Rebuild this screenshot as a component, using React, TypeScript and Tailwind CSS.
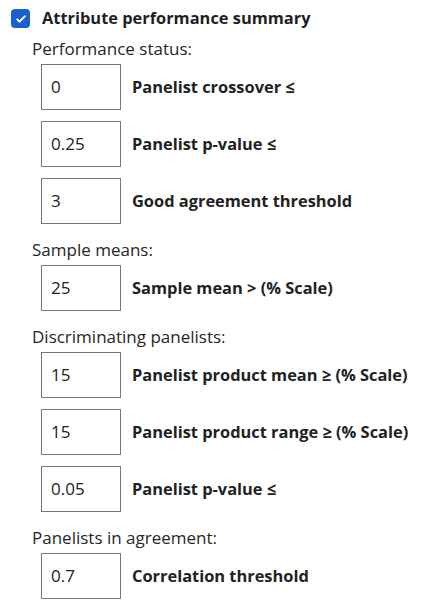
import React from 'react';

type Field = { value: string; label: string };
type Section = { title: string; fields: Field[] };

const sections: Section[] = [
  {
    title: 'Performance status:',
    fields: [
      { value: '0', label: 'Panelist crossover ≤' },
      { value: '0.25', label: 'Panelist p-value ≤' },
      { value: '3', label: 'Good agreement threshold' },
    ],
  },
  {
    title: 'Sample means:',
    fields: [{ value: '25', label: 'Sample mean > (% Scale)' }],
  },
  {
    title: 'Discriminating panelists:',
    fields: [
      { value: '15', label: 'Panelist product mean ≥ (% Scale)' },
      { value: '15', label: 'Panelist product range ≥ (% Scale)' },
      { value: '0.05', label: 'Panelist p-value ≤' },
    ],
  },
  {
    title: 'Panelists in agreement:',
    fields: [{ value: '0.7', label: 'Correlation threshold' }],
  },
];

const App: React.FC = () => {
  return (
    <div
      className="w-[425px] h-[615px] bg-white text-[#222] pl-[11px] pt-[9px]"
      style={{ fontFamily: '"Open Sans", "Noto Sans", sans-serif' }}
    >
      {/* Header */}
      <div className="flex items-center gap-[12px] h-[19px]">
        <div className="w-[19px] h-[19px] rounded-[4px] bg-[#1a5fcb] flex items-center justify-center">
          <svg viewBox="0 0 16 16" className="w-[12px] h-[12px]" fill="none">
            <path d="M3 8.5l3 3 7-7" stroke="white" strokeWidth="2.6" strokeLinecap="round" strokeLinejoin="round" />
          </svg>
        </div>
        <span className="text-[16.4px] font-bold text-[#1f1f1f] leading-none">Attribute performance summary</span>
      </div>

      <div className="pl-[30px]">
        {sections.map((section, i) => (
          <div key={section.title} className={i === 0 ? 'mt-[9px]' : 'mt-[14px]'}>
            <div className="text-[17px] leading-[24px] text-[#262626] -ml-[9px]">{section.title}</div>
            <div className="mt-[3px] flex flex-col gap-[11px]">
              {section.fields.map((f, j) => (
                <div key={j} className="flex items-center">
                  <div className="w-[80px] h-[46px] border border-[#767676] flex items-center pl-[9px] text-[17px] text-[#222]">
                    {f.value}
                  </div>
                  <span className="ml-[11px] text-[16.4px] font-bold text-[#222]">{f.label}</span>
                </div>
              ))}
            </div>
          </div>
        ))}
      </div>
    </div>
  );
};

export default App;
